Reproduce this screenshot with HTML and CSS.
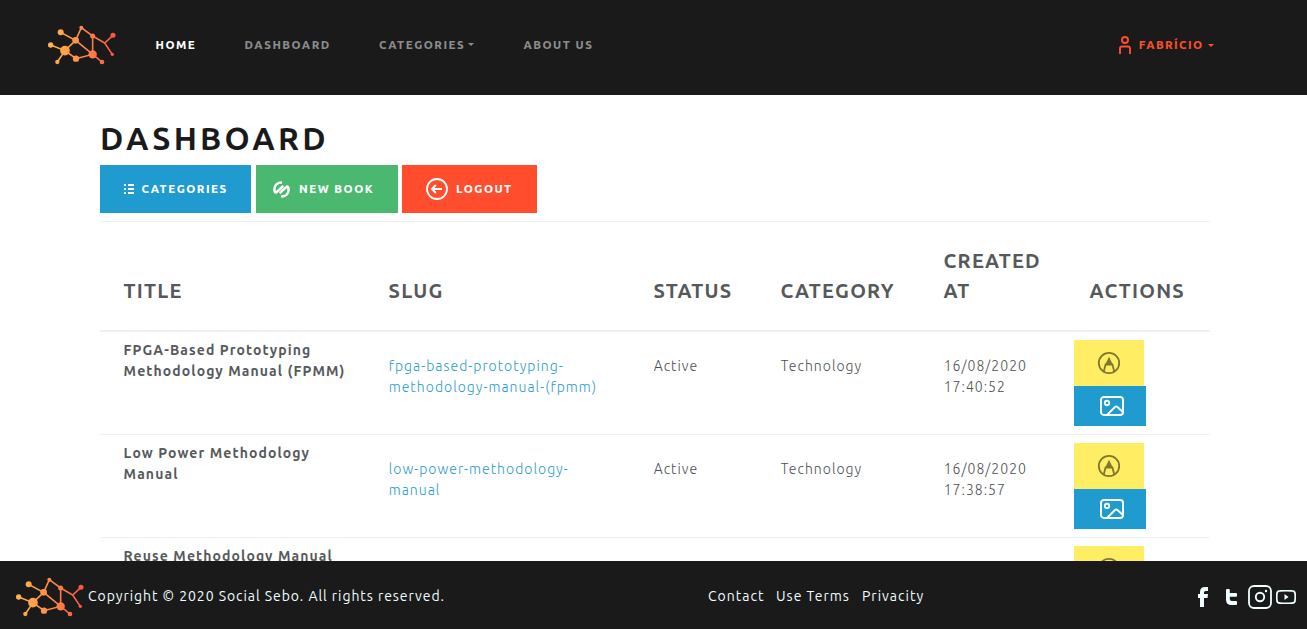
FILE: index.html
```html
<!DOCTYPE html>
<html lang="en">
<head>
<meta charset="utf-8">
<title>Social Sebo - Dashboard</title>
<link rel="stylesheet" href="styles.css">
</head>
<body>
<svg class="defs" width="0" height="0">
  <defs>
    <linearGradient id="flame" gradientUnits="userSpaceOnUse" x1="10" y1="0" x2="210" y2="0">
      <stop offset="0" stop-color="#ffb648"/><stop offset=".45" stop-color="#ff9148"/><stop offset="1" stop-color="#fb5548"/>
    </linearGradient>
    <symbol id="logo" viewBox="0 0 228 150">
      <path d="M47 37 92 61 109 23 143 48 179 69 204 46M179 69 202 103M143 48V103L92 61 60 92 17 75M60 92 37 126M60 92 93 116 143 103 171 126" fill="none" stroke="url(#flame)" stroke-width="4.800"/>
      <g fill="url(#flame)"><circle cx="47" cy="37" r="9"/><circle cx="92" cy="61" r="10"/><circle cx="109" cy="23" r="6"/><circle cx="143" cy="48" r="7.500"/><circle cx="204" cy="46" r="7.500"/><circle cx="202" cy="103" r="5"/><circle cx="143" cy="103" r="12.500"/><circle cx="60" cy="92" r="14.500"/><circle cx="17" cy="75" r="8"/><circle cx="37" cy="126" r="6.500"/><circle cx="93" cy="116" r="9.500"/><circle cx="171" cy="126" r="7"/></g>
    </symbol>
    <symbol id="edit" viewBox="0 0 24 24">
      <circle cx="12" cy="12" r="10.200" fill="none" stroke="currentColor" stroke-width="1.800"/>
      <path d="M6.800 20.300 8.600 13.500h6.800l1.800 6.800" fill="none" stroke="currentColor" stroke-width="1.800"/>
      <path d="M12 5.800 16 14H8Z" fill="currentColor"/>
    </symbol>
    <symbol id="image" viewBox="0 0 24 20">
      <g fill="none" stroke="currentColor" stroke-width="1.900"><rect x=".95" y=".95" width="22.100" height="18.100" rx="3"/><circle cx="7" cy="7" r="2.200"/><path d="M7.500 18.500 15 11q1.200-1.200 2.400 0l5.600 5"/></g>
    </symbol>
  </defs>
</svg>
<header class="navbar">
  <svg class="logo"><use href="#logo"/></svg>
  <nav class="nav">
    <a class="nav-link home active">Home</a>
    <a class="nav-link dash">Dashboard</a>
    <a class="nav-link cats">Categories<i class="caret"></i></a>
    <a class="nav-link about">About us</a>
  </nav>
  <a class="nav-link user">
    <svg class="user-icon" viewBox="0 0 12 18"><g fill="none" stroke="currentColor" stroke-width="1.900"><circle cx="6" cy="4" r="3.050"/><path d="M1 18v-5.500q0-2 2-2h6q2 0 2 2V18"/></g></svg>
    <span>Fabrício</span><i class="caret"></i>
  </a>
</header>
<main class="content">
  <h1 class="title">Dashboard</h1>
  <div class="toolbar">
    <a class="btn btn-blue"><svg class="i-list" viewBox="0 0 10 10" fill="currentColor"><path d="M0 0h2v2H0zM4 0h6v2H4zM0 4h2v2H0zM4 4h6v2H4zM0 8h2v2H0zM4 8h6v2H4z"/></svg><span>Categories</span></a>
    <a class="btn btn-green"><svg class="i-book" viewBox="0 0 17 17"><g fill="none" stroke="currentColor" stroke-width="2.500"><path d="M9 1.400C4.200 1.400 1.400 4.500 1.400 8.500Q1.400 11.500 3.200 11.500L10.300 4.800"/><path d="M8 15.600C12.800 15.600 15.600 12.500 15.600 8.500Q15.600 5.500 13.800 5.500L6.700 12.200"/></g></svg><span>New book</span></a>
    <a class="btn btn-red"><svg class="i-out" viewBox="0 0 22 22"><g fill="none" stroke="currentColor" stroke-width="1.800"><circle cx="11" cy="11" r="10"/><path d="M16 11H7" stroke-width="2"/><path d="M9.800 7 6 11l3.800 4" stroke-width="2"/></g></svg><span>Logout</span></a>
  </div>
  <div class="table">
    <div class="row head">
      <div class="th">Title</div><div class="th">Slug</div><div class="th">Status</div><div class="th">Category</div><div class="th">Created<br>at</div><div class="th">Actions</div>
    </div>
    <div class="row">
      <div class="name">FPGA-Based Prototyping<br>Methodology Manual (FPMM)</div>
      <div class="cell slug">fpga-based-prototyping-<br>methodology-manual-(fpmm)</div>
      <div class="cell">Active</div><div class="cell">Technology</div><div class="cell">16/08/2020<br>17:40:52</div>
      <div class="actions"><a class="edit"><svg><use href="#edit"/></svg></a><a class="image"><svg><use href="#image"/></svg></a></div>
    </div>
    <div class="row">
      <div class="name">Low Power Methodology<br>Manual</div>
      <div class="cell slug">low-power-methodology-<br>manual</div>
      <div class="cell">Active</div><div class="cell">Technology</div><div class="cell">16/08/2020<br>17:38:57</div>
      <div class="actions"><a class="edit"><svg><use href="#edit"/></svg></a><a class="image"><svg><use href="#image"/></svg></a></div>
    </div>
    <div class="row">
      <div class="name">Reuse Methodology Manual</div>
      <div class="cell"></div><div class="cell"></div><div class="cell"></div><div class="cell"></div>
      <div class="actions"><a class="edit"><svg><use href="#edit"/></svg></a></div>
    </div>
  </div>
</main>
<footer class="footer">
  <svg class="logo"><use href="#logo"/></svg>
  <span class="copy">Copyright © 2020 Social Sebo. All rights reserved.</span>
  <nav class="links"><a class="l1">Contact</a><a class="l2">Use Terms</a><a class="l3">Privacity</a></nav>
  <div class="social">
    <svg class="fb" viewBox="0 0 10 20"><path d="M10 0v4H7.500Q6 4 6 5.500V7h4l-.5 4H6v9H2v-9H0V7h2V5Q2 0 7 0Z" fill="currentColor"/></svg>
    <svg class="tw" viewBox="0 0 11 16"><path d="M0 1Q0 0 1 0h1.800q1 0 1 1v3H10q1 0 1 1v1.800q0 1-1 1H3.800V10q0 2 2 2H10q1 0 1 1v2q0 1-1 1H5.500Q0 16 0 10.500Z" fill="currentColor"/></svg>
    <svg class="ig" viewBox="0 0 24 24"><rect x="1" y="1" width="22" height="22" rx="5" fill="none" stroke="currentColor" stroke-width="1.800"/><circle cx="12" cy="12" r="4.200" fill="none" stroke="currentColor" stroke-width="1.900"/><circle cx="18" cy="6" r="1.200" fill="currentColor"/></svg>
    <svg class="yt" viewBox="0 0 20 14"><path d="M4 .9Q10 .5 16 .9 19.100 1 19.100 4q.3 3 0 6 0 3-3.100 3.100-6 .4-12 0Q.9 13 .9 10 .6 7 .9 4 .9 1 4 .9Z" fill="none" stroke="currentColor" stroke-width="1.700"/><path d="m8.500 4 4 3-4 3Z" fill="currentColor"/></svg>
  </div>
</footer>
</body>
</html>
```
FILE: styles.css
```css
* { box-sizing: border-box; }
body { margin: 0; height: 629px; display: flex; flex-direction: column; overflow: hidden; background: #fff; color: #55595c; font-family: Ubuntu, "Noto Sans", "Open Sans", sans-serif; font-size: 14px; line-height: 21px; }
svg { display: block; flex: none; }
.defs { position: absolute; }
.navbar { flex: none; height: 95px; padding: 0 93px 5px 45px; display: flex; align-items: center; background: #1a1a1a; }
.logo { width: 76px; height: 50px; }
.nav { display: flex; margin-left: 34.5px; flex: 1; }
.nav-link { display: flex; align-items: center; color: #8c8c8c; font-size: 11.5px; font-weight: 800; line-height: 19px; padding-bottom: 2px; text-transform: uppercase; letter-spacing: 1.5px; white-space: nowrap; }
.home { width: 89px; }
.dash { width: 134.5px; }
.cats { width: 144.5px; }
.active { color: #fff; }
.user { color: #ff4d2e; padding-bottom: 0; letter-spacing: 1.4px; }
.user span { padding-bottom: 2px; }
.user-icon { width: 12px; height: 18px; margin-right: 7.5px; }
.caret { margin-left: 2.5px; border: 3.5px solid transparent; border-top-color: currentColor; border-bottom: 0; }
.user .caret { margin-left: 4.5px; }
.content { flex: 1; min-height: 0; overflow: hidden; padding: 24px 97px 0 100px; }
.title { margin: 0; height: 46px; font-size: 32px; line-height: 38px; font-weight: 600; letter-spacing: 3.25px; text-transform: uppercase; color: #1a1a1a; }
.toolbar { display: flex; height: 56px; align-items: flex-start; }
.btn { display: flex; align-items: center; height: 48px; color: #fff; font-size: 11.5px; font-weight: 800; text-transform: uppercase; letter-spacing: 1.5px; white-space: nowrap; }
.btn span { padding-bottom: 2px; }
.btn-blue { width: 151px; margin-right: 5px; padding-left: 24px; background: #1f9bcf; }
.btn-green { width: 142px; margin-right: 4px; padding-left: 17px; background: #4bb870; }
.btn-red { width: 135px; padding-left: 24px; background: #ff4d2e; }
.i-list { width: 10px; height: 10px; margin-right: 7.5px; }
.i-book { width: 17px; height: 17px; margin-right: 9px; }
.i-out { width: 22px; height: 22px; margin-right: 8px; }
.row { display: grid; grid-template-columns: 265px 265px 127px 163px 146px 144px; height: 103px; border-top: 1px solid #eff0f1; }
.head { height: 111px; border-bottom: 2px solid #eff0f1; align-items: end; }
.head + .row { height: 102px; border-top: 0; }
.th { padding: 0 0 24px 23.6px; font-size: 20px; line-height: 30px; font-weight: 600; letter-spacing: 1.2px; text-transform: uppercase; white-space: nowrap; }
.name { padding: 8px 0 0 23.6px; font-weight: 700; letter-spacing: 1.1px; white-space: nowrap; }
.cell { padding: 24px 0 0 23.7px; font-weight: 300; letter-spacing: 1.02px; white-space: nowrap; color: #4a4e51; }
.slug { color: #1f9bcf; }
.actions { padding: 8px 0 0 8px; }
.edit, .image { display: flex; align-items: center; }
.edit { width: 70px; height: 46px; padding-left: 23px; background: #ffed63; color: #807731; }
.edit svg { width: 24px; height: 24px; }
.image { width: 72px; height: 40px; padding-left: 26px; background: #1f9bcf; color: #fff; }
.image svg { width: 24px; height: 20px; }
.footer { flex: none; height: 68px; padding: 0 11px 0 13px; display: flex; align-items: center; background: #1a1a1a; color: azure; letter-spacing: 1px; white-space: nowrap; }
.footer .logo { margin-top: 4px; }
.copy { width: 620px; margin-left: -1px; padding-top: 2px; letter-spacing: .94px; }
.links { flex: 1; display: flex; padding-top: 2px; }
.l1 { width: 68px; }
.l2 { width: 86px; }
.social { display: flex; align-items: center; padding-top: 4px; }
.fb { width: 10px; height: 20px; margin-right: 18px; }
.tw { width: 11px; height: 16px; margin-right: 11px; }
.ig { width: 24px; height: 24px; margin-right: 4px; }
.yt { width: 20px; height: 14px; }
```
